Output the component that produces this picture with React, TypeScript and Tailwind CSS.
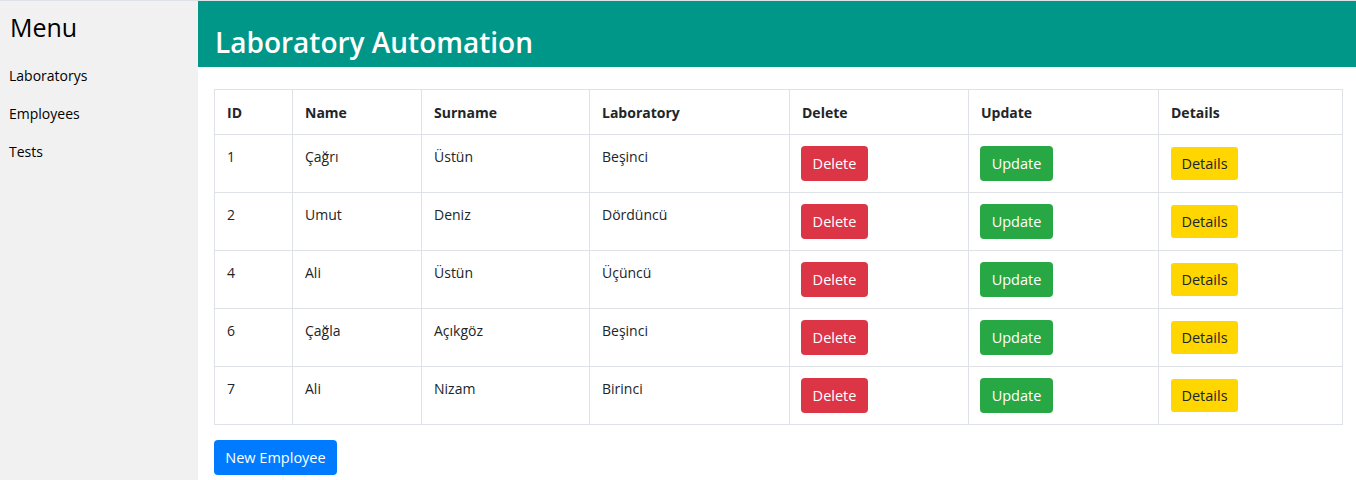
const employees = [
  { id: 1, name: "Çağrı", surname: "Üstün", lab: "Beşinci" },
  { id: 2, name: "Umut", surname: "Deniz", lab: "Dördüncü" },
  { id: 4, name: "Ali", surname: "Üstün", lab: "Üçüncü" },
  { id: 6, name: "Çağla", surname: "Açıkgöz", lab: "Beşinci" },
  { id: 7, name: "Ali", surname: "Nizam", lab: "Birinci" },
];

const menu = ["Laboratorys", "Employees", "Tests"];

export default function App() {
  return (
    <div
      className="flex h-[480px] w-full border-t border-[#dee2e6] bg-white text-[#212529]"
      style={{ fontFamily: '"Open Sans", "Noto Sans", sans-serif' }}
    >
      <aside className="w-[198px] shrink-0 bg-[#f1f1f1]">
        <div className="px-[10px] pt-[9px] text-[25px] font-medium leading-[34px] text-black">Menu</div>
        <nav className="mt-[13px] flex flex-col">
          {menu.map((m) => (
            <a key={m} className="block h-[38px] px-[9px] text-[14px] leading-[38px] text-black">
              {m}
            </a>
          ))}
        </nav>
      </aside>
      <main className="flex-1">
        <header className="flex h-[66px] items-end bg-[#009688] pb-[5px] pl-[17px]">
          <h2 className="text-[28px] font-semibold leading-[40px] text-white">Laboratory Automation</h2>
        </header>
        <div className="ml-[16px] mr-[14px] mt-[22px]">
          <table className="w-full table-fixed border-collapse text-[14px]">
            <colgroup>
              <col className="w-[78px]" />
              <col className="w-[129px]" />
              <col className="w-[168px]" />
              <col className="w-[200px]" />
              <col className="w-[179px]" />
              <col className="w-[190px]" />
              <col className="w-[184px]" />
            </colgroup>
            <thead>
              <tr className="h-[45px]">
                {["ID", "Name", "Surname", "Laboratory", "Delete", "Update", "Details"].map((h) => (
                  <th key={h} className="border border-[#dee2e6] px-[12px] text-left font-bold">
                    {h}
                  </th>
                ))}
              </tr>
            </thead>
            <tbody>
              {employees.map((e) => (
                <tr key={e.id} className="h-[58px]">
                  <td className="border border-[#dee2e6] px-[12px] pt-[11px] align-top leading-[22px]">{e.id}</td>
                  <td className="border border-[#dee2e6] px-[12px] pt-[11px] align-top leading-[22px]">{e.name}</td>
                  <td className="border border-[#dee2e6] px-[12px] pt-[11px] align-top leading-[22px]">{e.surname}</td>
                  <td className="border border-[#dee2e6] px-[12px] pt-[11px] align-top leading-[22px]">{e.lab}</td>
                  <td className="border border-[#dee2e6] px-[11px] pt-[11px] align-top">
                    <button className="h-[35px] w-[67px] rounded-[4px] bg-[#dc3545] text-[14.5px] text-white">Delete</button>
                  </td>
                  <td className="border border-[#dee2e6] px-[11px] pt-[11px] align-top">
                    <button className="h-[35px] w-[73px] rounded-[4px] bg-[#28a745] text-[14.5px] text-white">Update</button>
                  </td>
                  <td className="border border-[#dee2e6] px-[12px] pt-[12px] align-top">
                    <button className="h-[33px] w-[67px] rounded-[3px] bg-[#ffd600] text-[14.5px] text-[#212529]">Details</button>
                  </td>
                </tr>
              ))}
            </tbody>
          </table>
          <button className="mt-[15px] h-[35px] w-[123px] rounded-[4px] bg-[#007bff] text-[14.5px] text-white">
            New Employee
          </button>
        </div>
      </main>
    </div>
  );
}
